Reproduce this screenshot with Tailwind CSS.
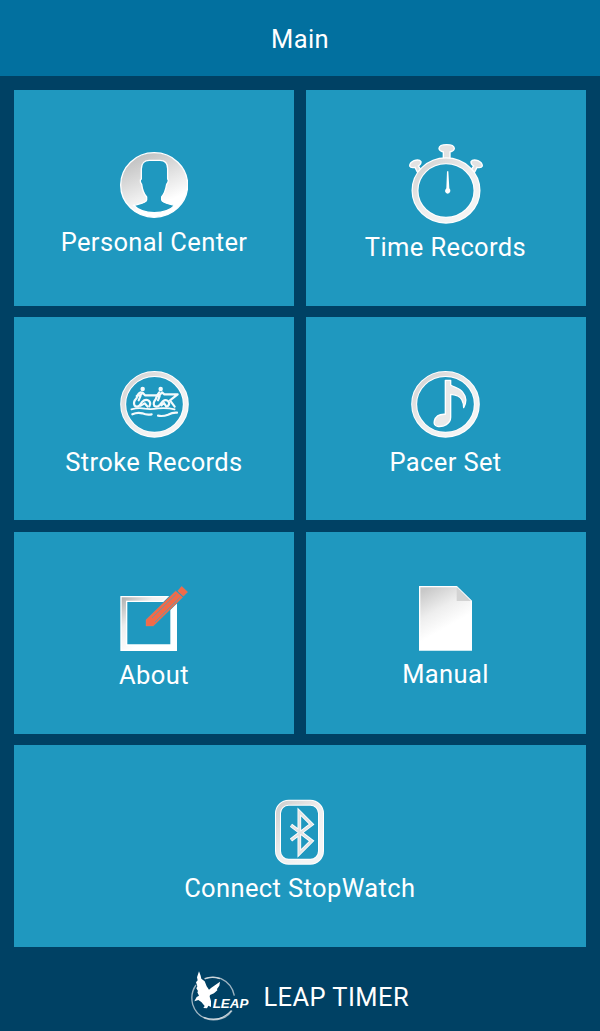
<!DOCTYPE html>
<html lang="en">
<head>
  <meta charset="UTF-8" />
  <meta name="viewport" content="width=device-width, initial-scale=1.0"/>
  <title>Leap Timer</title>
  <script src="https://cdn.jsdelivr.net/npm/@tailwindcss/browser@4"></script>
</head>
<body class="bg-[#004164] text-white font-[Roboto,sans-serif] text-[25.5px] leading-[30px] tracking-[0.38px] overflow-hidden">

  <!-- shared gradients -->
  <svg class="absolute w-0 h-0">
    <defs>
      <linearGradient id="face" x1="0.1" y1="0" x2="0.55" y2="1"><stop offset="0" stop-color="#b9b9b9"/><stop offset="0.45" stop-color="#dedede"/><stop offset="0.85" stop-color="#fff"/></linearGradient>
      <linearGradient id="ring" x1="0.1" y1="0" x2="0.8" y2="0.8"><stop offset="0" stop-color="#d2d2d2"/><stop offset="0.6" stop-color="#eee"/><stop offset="1" stop-color="#f4f4f4"/></linearGradient>
      <linearGradient id="page" x1="0.2" y1="0" x2="0.5" y2="0.65"><stop offset="0" stop-color="#c8c8c8"/><stop offset="0.55" stop-color="#eeeeee"/><stop offset="1" stop-color="#fff"/></linearGradient>
      <linearGradient id="frame" x1="0" y1="0" x2="0.6" y2="0.6"><stop offset="0" stop-color="#ababab"/><stop offset="0.5" stop-color="#eee"/><stop offset="1" stop-color="#fff"/></linearGradient>
    </defs>
  </svg>

  <header class="h-[76px] bg-[#02709f] flex justify-center pt-6">
    <h1>Main</h1>
  </header>

  <main class="ml-[14px] mt-[14px] w-[571.5px] grid grid-cols-2 grid-rows-[216px_203px_202px_202px] gap-x-[11.5px] gap-y-[11.3px]">
    <a href="#" class="bg-[#1f98bf] flex flex-col items-center pt-[62px]">
      <svg class="w-[68.3px] h-[66px]" viewBox="210 36 205 198">
        <ellipse cx="312.500" cy="135" rx="100.500" ry="97" fill="url(#face)" stroke="#fff" stroke-width="4"/>
        <path d="M251 196 C267 192 289 190 290 180 V171 C282 162 277 149 275 133 Q270 129 271 120 L274 117 V87 C274 69 285 61 298 61 H330 C344 61 353 70 353 86 V117 L355 120 Q355 129 350 133 C347 151 342 163 335 171 V180 C337 190 358 192 375 196 C361 211 338 218 313 218 S265 211 251 196Z" fill="#1f98bf" stroke="#fff" stroke-width="4"/>
      </svg>
      <span class="mt-[9px]">Personal Center</span>
    </a>
    <a href="#" class="bg-[#1f98bf] flex flex-col items-center pt-[54px]">
      <svg class="w-[74px] h-[80px]" viewBox="176 27 222 240">
        <g fill="#e2e2e2" stroke="#fff" stroke-width="4">
          <path d="M279 72 V51 Q267 48 266 40 Q267 29 289 29 T312 40 Q311 48 299 51 V72Z"/>
          <path d="M202 112 L211 103 L204 93 Q213 88 212 80 Q207 72 191 77 Q178 83 178 93 Q181 100 194 97 L200 109Z"/>
          <path d="M372 112 L363 103 L370 93 Q361 88 362 80 Q367 72 383 77 Q396 83 396 93 Q393 100 380 97 L374 109Z"/>
        </g>
        <ellipse cx="287" cy="166.500" rx="93" ry="89" fill="none" stroke="#fff" stroke-width="21"/>
        <ellipse cx="287" cy="166.500" rx="93" ry="89" fill="none" stroke="url(#ring)" stroke-width="14"/>
        <path d="M290 109 H294 L297 160 Q301 164 300 169 Q298 176 292 176 T284 169 Q284 164 288 160Z" fill="#fff"/>
      </svg>
      <span class="mt-[8px]">Time Records</span>
    </a>
    <a href="#" class="bg-[#1f98bf] flex flex-col items-center pt-[54px]">
      <svg class="w-[69px] h-[67px]" viewBox="29 33 207 201">
        <ellipse cx="132.500" cy="133" rx="94" ry="91" fill="none" stroke="#fff" stroke-width="18"/>
        <ellipse cx="132.500" cy="133" rx="94" ry="91" fill="none" stroke="url(#ring)" stroke-width="12"/>
        <g fill="none" stroke="#f4fafc" stroke-width="6.500" stroke-linecap="round" stroke-linejoin="round">
          <circle cx="97" cy="87" r="3.500"/>
          <circle cx="151" cy="87" r="3.500"/>
          <path d="M92 97 Q82 100 79 114 Q67 126 73 137 Q80 143 88 136 L95 126 Q105 116 115 122 Q123 129 117 139"/>
          <path d="M79 108 L90 105 L97 98 L104 106 H138 M91 107 L85 121 M91 137 L103 130 L112 140"/>
          <path d="M147 97 Q140 104 136 118 Q127 128 132 138 Q141 143 149 134 L157 124 Q167 117 174 124 Q180 131 172 139"/>
          <path d="M142 108 L150 103 L155 97 L162 103 H202 L179 121 L193 140 M148 108 L143 121 M153 136 L161 129 L168 140"/>
          <path d="M63 148 Q84 142 104 146 Q122 149 143 145 Q172 143 193 148" stroke-width="5"/>
          <path d="M66 163 Q81 156 96 160 Q109 166 124 163 M143 167 Q158 170 173 164 Q187 157 200 158"/>
        </g>
      </svg>
      <span class="mt-[9px]">Stroke Records</span>
    </a>
    <a href="#" class="bg-[#1f98bf] flex flex-col items-center pt-[54px]">
      <svg class="w-[69px] h-[67px]" viewBox="32 33 207 201">
        <ellipse cx="135.500" cy="133" rx="94" ry="91" fill="none" stroke="#fff" stroke-width="18"/>
        <ellipse cx="135.500" cy="133" rx="94" ry="91" fill="none" stroke="url(#ring)" stroke-width="12"/>
        <path d="M135 61 H151 V75 C160 83 176 81 188 98 C199 112 197 130 190 143 Q189 115 172 108 Q161 103 151 103 V172 C151 191 130 202 111 199 Q99 196 102 183 C106 168 119 162 135 163Z" fill="#e9e9e9" stroke="#fff" stroke-width="4" stroke-linejoin="round"/>
      </svg>
      <span class="mt-[9px]">Pacer Set</span>
    </a>
    <a href="#" class="bg-[#1f98bf] flex flex-col items-center pt-[54px]">
      <svg class="w-[68px] h-[66px]" viewBox="29 33 204 198">
        <path d="M32 65 H172 L158 79 H49 V210 H182 V106 L198 90 V226 H32Z" fill="url(#frame)" stroke="#fff" stroke-width="4"/>
        <path d="M202 48 L214 34 L232 51 L219 64Z" fill="#f26a48" stroke="#d08672" stroke-width="1"/>
        <path d="M196 48 L217 67 L129 153 H107 V134Z" fill="#f26a48" stroke="#d08672" stroke-width="1"/>
        <path d="M197 58 L125 129 M208 68 L134 141" stroke="#4f9fb8" stroke-width="2.500"/>
      </svg>
      <span class="mt-[8px]">About</span>
    </a>
    <a href="#" class="bg-[#1f98bf] flex flex-col items-center pt-[54px]">
      <svg class="w-[53px] h-[65px]" viewBox="72 33 159 195">
        <path d="M74 35 H185 L229 78 V225 H74Z" fill="url(#page)" stroke="#fff" stroke-width="4"/>
        <path d="M185 36 L228 78 H185Z" fill="#d3d3d3"/>
        <path d="M185 35 L229 78" stroke="#e8f0f3" stroke-width="2"/>
      </svg>
      <span class="mt-[8px]">Manual</span>
    </a>
    <a href="#" class="col-span-2 bg-[#1f98bf] flex flex-col items-center pt-[54px]">
      <svg class="w-[49px] h-[66px]" viewBox="45 25 147 198">
        <rect x="54" y="36" width="129" height="177" rx="32" fill="none" stroke="#fff" stroke-width="18"/>
        <rect x="54" y="36" width="129" height="177" rx="32" fill="none" stroke="url(#ring)" stroke-width="12"/>
        <path d="M93 104 L155 151 L118 188 V64 L155 101 L93 148" fill="none" stroke="#fff" stroke-width="11"/>
        <path d="M93 104 L155 151 L118 188 V64 L155 101 L93 148" fill="none" stroke="#e4e4e4" stroke-width="6"/>
      </svg>
      <span class="mt-[8px]">Connect StopWatch</span>
    </a>
  </main>

  <footer class="flex justify-center gap-[14.5px] pt-[24px]">
    <svg class="w-[58px] h-[50px]" viewBox="32 34 174 150">
      <path d="M73 58 Q97 47 122 57 Q155 72 162 108 M47 76 Q29 101 37 134 Q49 172 89 180 Q134 184 155 153" fill="none" stroke="#9db4c1" stroke-width="4"/>
      <path d="M73 57 Q97 49 119 57 M70 173 Q119 191 153 153" fill="none" stroke="#cbd5db" stroke-width="4"/>
      <path d="M56 35 L61 48 L63 57 L73 65 L79 80 L86 90 L93 84 L119 66 L117 78 L110 88 L111 92 L101 101 L89 106 L88 111 L92 124 V142 L84 138 L80 146 L69 145 L73 139 L63 127 L54 121 L42 125 L49 112 L56 108 L51 98 L53 94 L48 86 L51 80 L47 68 L52 62 L50 53Z" fill="#fff"/>
      <text x="97" y="146" font-family="Liberation Sans, sans-serif" font-size="37" font-weight="700" font-style="italic" fill="#fff" textLength="107" lengthAdjust="spacingAndGlyphs" letter-spacing="0">LEAP</text>
    </svg>
    <span class="mt-[11px] tracking-[0.42px]">LEAP TIMER</span>
  </footer>

</body>
</html>
